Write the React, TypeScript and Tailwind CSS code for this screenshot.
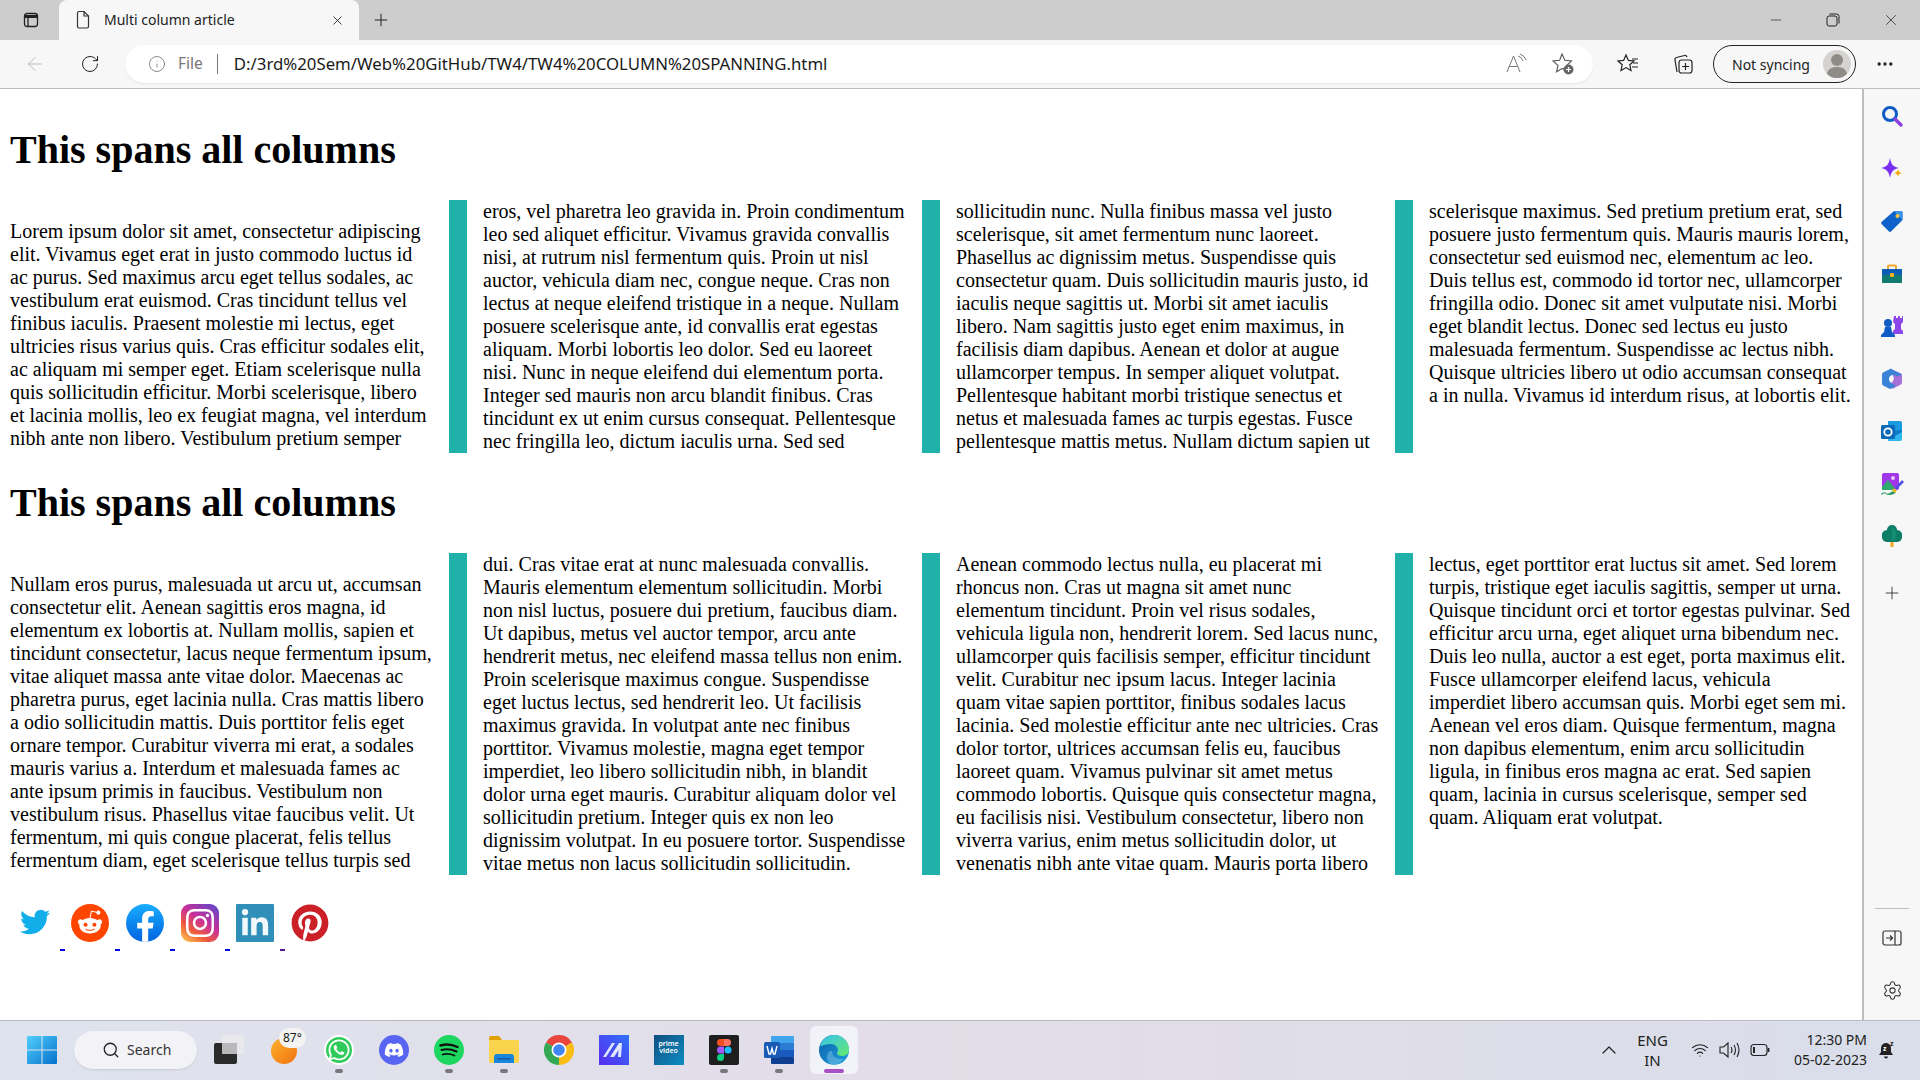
import { ChevronUp, Plus, RotateCw, ArrowLeft, Info, X, Minus, Search, Settings, MoreHorizontal, Wifi } from "lucide-react";
import { FaTwitter, FaRedditAlien, FaFacebookF, FaInstagram, FaLinkedinIn, FaPinterest, FaWhatsapp, FaDiscord } from "react-icons/fa";

const para1 =
  "Lorem ipsum dolor sit amet, consectetur adipiscing elit. Vivamus eget erat in justo commodo luctus id ac purus. Sed maximus arcu eget tellus sodales, ac vestibulum erat euismod. Cras tincidunt tellus vel finibus iaculis. Praesent molestie mi lectus, eget ultricies risus varius quis. Cras efficitur sodales elit, ac aliquam mi semper eget. Etiam scelerisque nulla quis sollicitudin efficitur. Morbi scelerisque, libero et lacinia mollis, leo ex feugiat magna, vel interdum nibh ante non libero. Vestibulum pretium semper eros, vel pharetra leo gravida in. Proin condimentum leo sed aliquet efficitur. Vivamus gravida convallis nisi, at rutrum nisl fermentum quis. Proin ut nisl auctor, vehicula diam nec, congue neque. Cras non lectus at neque eleifend tristique in a neque. Nullam posuere scelerisque ante, id convallis erat egestas aliquam. Morbi lobortis leo dolor. Sed eu laoreet nisi. Nunc in neque eleifend dui elementum porta. Integer sed mauris non arcu blandit finibus. Cras tincidunt ex ut enim cursus consequat. Pellentesque nec fringilla leo, dictum iaculis urna. Sed sed sollicitudin nunc. Nulla finibus massa vel justo scelerisque, sit amet fermentum nunc laoreet. Phasellus ac dignissim metus. Suspendisse quis consectetur quam. Duis sollicitudin mauris justo, id iaculis neque sagittis ut. Morbi sit amet iaculis libero. Nam sagittis justo eget enim maximus, in facilisis diam dapibus. Aenean et dolor at augue ullamcorper tempus. In semper aliquet volutpat. Pellentesque habitant morbi tristique senectus et netus et malesuada fames ac turpis egestas. Fusce pellentesque mattis metus. Nullam dictum sapien ut scelerisque maximus. Sed pretium pretium erat, sed posuere justo fermentum quis. Mauris mauris lorem, consectetur sed euismod nec, elementum ac leo. Duis tellus est, commodo id tortor nec, ullamcorper fringilla odio. Donec sit amet vulputate nisi. Morbi eget blandit lectus. Donec sed lectus eu justo malesuada fermentum. Suspendisse ac lectus nibh. Quisque ultricies libero ut odio accumsan consequat a in nulla. Vivamus id interdum risus, at lobortis elit.";

const para2 =
  "Nullam eros purus, malesuada ut arcu ut, accumsan consectetur elit. Aenean sagittis eros magna, id elementum ex lobortis at. Nullam mollis, sapien et tincidunt consectetur, lacus neque fermentum ipsum, vitae aliquet massa ante vitae dolor. Maecenas ac pharetra purus, eget lacinia nulla. Cras mattis libero a odio sollicitudin mattis. Duis porttitor felis eget ornare tempor. Curabitur viverra mi erat, a sodales mauris varius a. Interdum et malesuada fames ac ante ipsum primis in faucibus. Vestibulum non vestibulum risus. Phasellus vitae faucibus velit. Ut fermentum, mi quis congue placerat, felis tellus fermentum diam, eget scelerisque tellus turpis sed dui. Cras vitae erat at nunc malesuada convallis. Mauris elementum elementum sollicitudin. Morbi non nisl luctus, posuere dui pretium, faucibus diam. Ut dapibus, metus vel auctor tempor, arcu ante hendrerit metus, nec eleifend massa tellus non enim. Proin scelerisque maximus congue. Suspendisse eget luctus lectus, sed hendrerit leo. Ut facilisis maximus gravida. In volutpat ante nec finibus porttitor. Vivamus molestie, magna eget tempor imperdiet, leo libero sollicitudin nibh, in blandit dolor urna eget mauris. Curabitur aliquam dolor vel sollicitudin pretium. Integer quis ex non leo dignissim volutpat. In eu posuere tortor. Suspendisse vitae metus non lacus sollicitudin sollicitudin. Aenean commodo lectus nulla, eu placerat mi rhoncus non. Cras ut magna sit amet nunc elementum tincidunt. Proin vel risus sodales, vehicula ligula non, hendrerit lorem. Sed lacus nunc, ullamcorper quis facilisis semper, efficitur tincidunt velit. Curabitur nec ipsum lacus. Integer lacinia quam vitae sapien porttitor, finibus sodales lacus lacinia. Sed molestie efficitur ante nec ultricies. Cras dolor tortor, ultrices accumsan felis eu, faucibus laoreet quam. Vivamus pulvinar sit amet metus commodo lobortis. Quisque quis consectetur magna, eu facilisis nisi. Vestibulum consectetur, libero non viverra varius, enim metus sollicitudin dolor, ut venenatis nibh ante vitae quam. Mauris porta libero lectus, eget porttitor erat luctus sit amet. Sed lorem turpis, tristique eget iaculis sagittis, semper ut urna. Quisque tincidunt orci et tortor egestas pulvinar. Sed efficitur arcu urna, eget aliquet urna bibendum nec. Duis leo nulla, auctor a est eget, porta maximus elit. Fusce ullamcorper eleifend lacus, vehicula imperdiet libero accumsan quis. Morbi eget sem mi. Aenean vel eros diam. Quisque fermentum, magna non dapibus elementum, enim arcu sollicitudin ligula, in finibus eros magna ac erat. Sed sapien quam, lacinia in cursus scelerisque, semper sed quam. Aliquam erat volutpat.";

function Heading() {
  return <h1 className="[column-span:all] text-[40px] font-bold my-[27px] leading-[46px]">This spans all columns</h1>;
}

function Socials() {
  const box = "inline align-baseline";
  return (
    <p className="mt-[23px]">
      <a href="#" className="text-[#0000ee] underline">
        <svg width={50} height={50} viewBox="0 0 50 50" className={box}>
          <FaTwitter x={10} y={9} size={30} color="#12aeea" />
        </svg>{" "}
      </a>
      <a href="#" className="text-[#0000ee] underline">
        <svg width={50} height={50} viewBox="0 0 50 50" className={box}>
          <circle cx={25} cy={25} r={19} fill="#ff4500" />
          <FaRedditAlien x={12} y={11} size={26} color="#fff" />
        </svg>{" "}
      </a>
      <a href="#" className="text-[#0000ee] underline">
        <svg width={50} height={50} viewBox="0 0 50 50" className={box}>
          <defs>
            <linearGradient id="fb" x1="0" y1="0" x2="0" y2="1">
              <stop offset="0" stopColor="#18acfe" />
              <stop offset="1" stopColor="#0163e0" />
            </linearGradient>
            <clipPath id="fbc">
              <circle cx={25} cy={25} r={19} />
            </clipPath>
          </defs>
          <circle cx={25} cy={25} r={19} fill="url(#fb)" />
          <g clipPath="url(#fbc)">
            <FaFacebookF x={10} y={13} size={31} color="#fff" />
          </g>
        </svg>{" "}
      </a>
      <a href="#" className="text-[#0000ee] underline">
        <svg width={50} height={50} viewBox="0 0 50 50" className={box}>
          <defs>
            <linearGradient id="ig" x1="0.1" y1="1" x2="0.8" y2="0">
              <stop offset="0" stopColor="#fdc14e" />
              <stop offset="0.3" stopColor="#ee5a3c" />
              <stop offset="0.6" stopColor="#c9309a" />
              <stop offset="1" stopColor="#6a45c4" />
            </linearGradient>
          </defs>
          <rect x={6} y={6} width={38} height={38} rx={9} fill="url(#ig)" />
          <FaInstagram x={9} y={9} size={32} color="#fff" />
        </svg>{" "}
      </a>
      <a href="#" className="text-[#551a8b] underline">
        <svg width={50} height={50} viewBox="0 0 50 50" className={box}>
          <rect x={6} y={6} width={38} height={38} rx={1} fill="#2f8fb9" />
          <FaLinkedinIn x={10} y={11} size={30} color="#f0f8fb" />
        </svg>{" "}
      </a>
      <a href="#" className="text-[#0000ee] underline">
        <svg width={50} height={50} viewBox="0 0 50 50" className={box}>
          <circle cx={25} cy={25} r={18} fill="#fff" />
          <FaPinterest x={6} y={6} size={38} color="#cb2027" />
        </svg>
      </a>
    </p>
  );
}

function TabBar() {
  return (
    <div className="h-10 bg-[#cdcdcd] flex items-stretch shrink-0">
      <div className="w-[59px] flex items-center justify-center">
        <svg width={18} height={18} viewBox="0 0 18 18" fill="none" stroke="#222" strokeWidth={1.3} className="ml-[2px]">
          <rect x={2.5} y={2.5} width={13} height={13} rx={2.5} />
          <path d="M3 5.5h12" strokeWidth={3} />
          <path d="M6 5v10" />
        </svg>
      </div>
      <div className="w-[300px] bg-[#f7f7f7] rounded-t-lg flex items-center text-[14px] text-[#222] pl-[15px] pr-[14px]">
        <svg width={18} height={20} viewBox="0 0 18 20" fill="none" stroke="#333" strokeWidth={1.2} className="mr-[22px]">
          <path d="M3.5 3a1.5 1.5 0 0 1 1.5-1.5h5l4.500 4.500v10.500a1.500 1.500 0 0 1-1.500 1.500h-8a1.500 1.500 0 0 1-1.500-1.500z" />
          <path d="M10 1.500v4.500h4.500" />
        </svg>
        <span className="-ml-[10px] font-['Noto_Sans',sans-serif] flex-1 -translate-y-px">Multi column article</span>
        <X size={15} strokeWidth={1.4} color="#222" />
      </div>
      <div className="w-[44px] flex items-center justify-center">
        <Plus size={20} strokeWidth={1.2} color="#222" />
      </div>
      <div className="flex-1" />
      <div className="flex items-center">
        <div className="w-[56px] flex justify-center mr-0">
          <Minus size={16} strokeWidth={1} color="#222" />
        </div>
        <div className="w-[58px] flex justify-center">
          <svg width={14} height={14} viewBox="0 0 14 14" fill="none" stroke="#222" strokeWidth={1}>
            <rect x={1} y={3} width={10} height={10} rx={2} />
            <path d="M3.500 1h7a2.500 2.500 0 0 1 2.500 2.500v7" />
          </svg>
        </div>
        <div className="w-[58px] flex justify-center">
          <X size={18} strokeWidth={1} color="#222" />
        </div>
      </div>
    </div>
  );
}

function Toolbar() {
  return (
    <div className="h-[49px] bg-[#f7f7f7] border-b border-[#bfbfbf] flex items-center shrink-0 font-['Noto_Sans',sans-serif]">
      <div className="w-[70px] flex justify-center">
        <ArrowLeft size={22} strokeWidth={1} color="#b5b5b5" />
      </div>
      <div className="w-[40px] flex justify-center">
        <RotateCw size={20} strokeWidth={1.2} color="#222" />
      </div>
      <div className="ml-[15px] w-[1468px] h-[38px] bg-white rounded-full flex items-center pl-[23px] pr-[18px] shadow-[0_1px_2px_rgba(0,0,0,0.08)]">
        <Info size={18} strokeWidth={1} color="#666" />
        <span className="ml-[12px] text-[#777] text-[15.5px]">File</span>
        <span className="ml-[14px] w-px h-5 bg-[#777]" />
        <span className="ml-[16px] text-[#1a1a1a] text-[16.8px] flex-1">D:/3rd%20Sem/Web%20GitHub/TW4/TW4%20COLUMN%20SPANNING.html</span>
        <svg width={22} height={22} viewBox="0 0 22 22" fill="none" stroke="#777" strokeWidth={1} className="mr-[24px]">
          <path d="M2 19l6.500-16 6.500 16M4.500 13.500h8" />
          <path d="M13 3q4 1 5 5M15 1q5 2 6 6" />
        </svg>
        <svg width={24} height={24} viewBox="0 0 24 24" fill="none" stroke="#555" strokeWidth={1.1}>
          <path d="M11 2l2.800 6.300 6.700.7-5 4.600 1 4-5.500-1-5.500 3.200 1.500-6.400-5-4.500 6.700-.7z" />
          <circle cx={17.500} cy={17.500} r={5} fill="#666" stroke="none" />
          <path d="M17.500 15v5M15 17.500h5" stroke="#fff" strokeWidth={1.2} />
        </svg>
      </div>
      <svg width={22} height={22} viewBox="0 0 22 22" fill="none" stroke="#222" strokeWidth={1.2} className="ml-[24px]">
        <path d="M9 2l2.400 5.400 5.600.6-4.200 3.800 1.200 5.800-5-3-5 3 1.200-5.800L1 8l5.600-.6z" />
        <path d="M15 6h6M16 10h5M15 14h6" />
      </svg>
      <svg width={22} height={22} viewBox="0 0 22 22" fill="none" stroke="#222" strokeWidth={1.2} className="ml-[33px]">
        <path d="M5 19l-2-12a2 2 0 0 1 1.500-2.500l8-2a2 2 0 0 1 2.500 1.500" />
        <rect x={7} y={7} width={13} height={13} rx={2.500} fill="#f7f7f7" />
        <path d="M13.500 10v7M10 13.500h7" />
      </svg>
      <div className="ml-[19px] w-[143px] h-[38px] rounded-full border border-[#222] flex items-center pl-[18px] pr-[4px] text-[14px] text-[#222] justify-between">
        <span>Not syncing</span>
        <svg width={28} height={28} viewBox="0 0 28 28">
          <circle cx={14} cy={14} r={14} fill="#d5d3cf" />
          <circle cx={14} cy={10} r={6} fill="#8f8c87" />
          <path d="M4 24c1-6 6-7 10-7s9 1 10 7a14 14 0 0 1-20 0z" fill="#8f8c87" />
        </svg>
      </div>
      <div className="flex-1 flex justify-center pr-[6px]">
        <MoreHorizontal size={20} strokeWidth={2} color="#222" />
      </div>
    </div>
  );
}

function SideBar() {
  const cell = "h-[52.5px] flex items-center justify-center";
  return (
    <aside className="w-[58px] bg-[#f7f7f7] border-l-2 border-[#bdbdbd] pt-px flex flex-col items-stretch shrink-0">
      <div className={cell}>
        <svg width={24} height={24} viewBox="0 0 24 24" fill="none">
          <circle cx={10} cy={10} r={6.500} stroke="#0f5cc4" strokeWidth={3} />
          <path d="M15 15l6 6" stroke="#8a3fe0" strokeWidth={3.500} strokeLinecap="round" />
        </svg>
      </div>
      <div className={cell}>
        <svg width={24} height={24} viewBox="0 0 24 24">
          <path d="M10 1c1 6 3 9 9 10-6 1-8 4-9 10-1-6-3-9-9-10 6-1 8-4 9-10z" fill="#7a2ff0" />
          <path d="M18 12c.4 2.500 1.500 3.600 4 4-2.500.4-3.600 1.500-4 4-.4-2.500-1.500-3.600-4-4 2.500-.4 3.600-1.500 4-4z" fill="#f5a90f" />
        </svg>
      </div>
      <div className={cell}>
        <svg width={24} height={24} viewBox="0 0 24 24">
          <path d="M14 2h7a1.500 1.500 0 0 1 1.500 1.500V11L11 22.500a1.500 1.500 0 0 1-2 0L1.500 15a1.500 1.500 0 0 1 0-2z" fill="#0f62c9" />
          <path d="M14 2h7a1.500 1.500 0 0 1 1.500 1.500V11z" fill="#3c94e8" />
          <circle cx={17.500} cy={7} r={2} fill="#ffc83d" />
        </svg>
      </div>
      <div className={cell}>
        <svg width={24} height={24} viewBox="0 0 24 24">
          <path d="M8 7V4.500a1 1 0 0 1 1-1h6a1 1 0 0 1 1 1V7" fill="none" stroke="#f0a92e" strokeWidth={2} />
          <rect x={2} y={7} width={20} height={6} fill="#0f5fb8" />
          <rect x={2} y={13} width={20} height={8} fill="#137a70" />
          <rect x={10} y={11} width={4} height={4} rx={1} fill="#f7b21e" />
        </svg>
      </div>
      <div className={cell}>
        <svg width={24} height={24} viewBox="0 0 24 24">
          <path d="M14 2h2v2h2V2h2v2h2V2h1v6l-2 2v5l2 2v3h-10v-3l2-2v-5l-2-2z" fill="#8c45e8" />
          <circle cx={8} cy={9} r={4} fill="#0f5cc4" />
          <path d="M5 13h6l1 5 3 3v2H1v-2l3-3z" fill="#0f5cc4" />
        </svg>
      </div>
      <div className={cell}>
        <svg width={24} height={24} viewBox="0 0 24 24" fill="none">
          <path d="M10 1.500l10 4.500a3 3 0 0 1 2 3v6a3 3 0 0 1-2 3l-8 4-1-6a5 5 0 0 0 0-9z" fill="#a56fd8" />
          <path d="M11 1.500L4 5a3 3 0 0 0-2 3v8a3 3 0 0 0 2 3l6 3 6-3-4-2.500a4.500 4.500 0 1 1 5-7l5-2-10-5z" fill="#3b82d9" />
        </svg>
      </div>
      <div className={cell}>
        <svg width={24} height={24} viewBox="0 0 24 24">
          <path d="M8 2h12a2 2 0 0 1 2 2v8H8z" fill="#1a9be0" />
          <path d="M10 12l12 0v8a2 2 0 0 1-2 2H8v-10z" fill="#2fb5ef" />
          <path d="M8 12l14-1v2l-9 5z" fill="#0f78c8" />
          <rect x={1} y={6} width={14} height={14} rx={1.500} fill="#0b69b8" />
          <circle cx={8} cy={13} r={3.700} fill="none" stroke="#fff" strokeWidth={1.800} />
        </svg>
      </div>
      <div className={cell}>
        <svg width={24} height={24} viewBox="0 0 24 24">
          <rect x={2} y={1} width={17} height={17} rx={2} fill="#a237e8" />
          <circle cx={13} cy={6} r={2} fill="#e9c4ff" />
          <path d="M2 15l6-7 6 7v3H2z" fill="#2eaa6e" />
          <path d="M14 17l8-9 2 2-8 8z" fill="#5250e6" />
          <path d="M1 22q3-3 5-1t5-1l3-1 2 1-2 2q-6 2-8 0t-4 1z" fill="#239a62" />
          <circle cx={14.500} cy={18.500} r={2} fill="#f0b52b" />
        </svg>
      </div>
      <div className={cell}>
        <svg width={24} height={24} viewBox="0 0 24 24">
          <path d="M12 1a5 5 0 0 1 5 5 5 5 0 0 1 5 6 5 5 0 0 1-5 6H7a5 5 0 0 1-5-6 5 5 0 0 1 5-6 5 5 0 0 1 5-5z" fill="#0e7d68" />
          <path d="M12 3a8 8 0 0 1 4 8 8 8 0 0 1-4 7z" fill="#18a07a" opacity={0.5} />
          <rect x={10.500} y={18} width={3} height={5} fill="#f5a623" />
        </svg>
      </div>
      <div className="h-[52px] mt-[4px] flex items-center justify-center">
        <Plus size={20} strokeWidth={1} color="#222" />
      </div>
      <div className="mt-auto mx-[11px] h-px bg-[#bfbfbf]" />
      <div className="h-[58px] flex items-center justify-center">
        <svg width={20} height={18} viewBox="0 0 20 18" fill="none" stroke="#333" strokeWidth={1.200}>
          <rect x={1} y={2} width={18} height={14} rx={2} />
          <path d="M13 2v14M4 9h6M8 6.500L10.500 9 8 11.500" />
        </svg>
      </div>
      <div className="h-[53px] pb-[6px] flex items-center justify-center">
        <Settings size={21} strokeWidth={1.200} color="#333" />
      </div>
    </aside>
  );
}

function Dock({ active, on, children }: { active?: boolean; on?: boolean; children: React.ReactNode }) {
  return (
    <div className={active ? "relative w-[48px] h-[48px] mx-[3.500px] flex items-center justify-center rounded-md bg-[#f1f3f9]" : "relative w-[48px] h-[48px] mx-[3.500px] flex items-center justify-center"}>
      {children}
      {on && <span className="absolute bottom-[1px] left-[20px] w-[8px] h-[4px] rounded-full bg-[#77777c]" />}
      {active && <span className="absolute bottom-[1px] left-[14px] w-[20px] h-[4px] rounded-full bg-[#a94fc8]" />}
    </div>
  );
}

function TaskBar() {
  return (
    <footer className="h-[60px] shrink-0 border-t border-[#b9b9be] pb-[2px] bg-linear-to-r from-[#dee3ee] via-[#e3dde8] to-[#d9deea] flex items-center font-['Noto_Sans',sans-serif] text-[#222]">
      <svg width={30} height={30} viewBox="0 0 30 30" className="ml-[27px]">
        <defs>
          <linearGradient id="win" x1="0" y1="0" x2="1" y2="1">
            <stop offset="0" stopColor="#4fd0fb" />
            <stop offset="1" stopColor="#0670cc" />
          </linearGradient>
        </defs>
        <path d="M1 1h13.500v13.500H0V2a1 1 0 0 1 1-1zM15.500 1H29a1 1 0 0 1 1 1v12.500H15.500zM0 15.500h14.500V29H1a1 1 0 0 1-1-1zM15.500 15.500H30V28a1 1 0 0 1-1 1H15.500z" fill="url(#win)" />
      </svg>
      <div className="ml-[17px] w-[123px] h-[38px] rounded-full bg-[#f3f2f6] shadow-[0_1px_2px_rgba(0,0,0,0.1)] flex items-center pl-[28px] text-[14px]">
        <Search size={18} strokeWidth={1.700} color="#222" />
        <span className="ml-[7px] text-[#333]">Search</span>
      </div>
      <svg width={32} height={30} viewBox="0 0 32 30" className="ml-[17px]">
        <rect x={0} y={8} width={23} height={21} rx={2} fill="#2b2b2b" />
        <rect x={8} y={0} width={22} height={19} rx={2} fill="#e9e9ec" opacity={0.95} />
        <rect x={8} y={8} width={15} height={11} fill="#b9b9bc" />
      </svg>
      <div className="relative ml-[25px] w-[26px] h-[26px] mt-[2px] rounded-full bg-linear-to-br from-[#fbb02b] to-[#f0720f]">
        <span className="absolute -top-[10px] left-[8px] px-[4px] h-[20px] leading-[20px] rounded-full bg-[#f4f3f2] text-[12px] text-[#1a1a1a]">87°</span>
      </div>
      <div className="ml-[14px] flex items-center">
        <Dock on>
          <span className="w-[30px] h-[30px] rounded-full bg-[#2fcb5a] border-2 border-white flex items-center justify-center">
            <FaWhatsapp size={24} color="#fff" />
          </span>
        </Dock>
        <Dock>
          <span className="w-[30px] h-[30px] rounded-full bg-[#5865f2] flex items-center justify-center">
            <FaDiscord size={20} color="#fff" />
          </span>
        </Dock>
        <Dock on>
          <span className="w-[30px] h-[30px] rounded-full bg-[#1ed760] flex items-center justify-center">
            <svg width={20} height={16} viewBox="0 0 20 16" fill="none" stroke="#111" strokeLinecap="round">
              <path d="M1.500 3.500q8.500-2.500 17 1.500" strokeWidth={2.400} />
              <path d="M2.500 8q7.500-2 15 1.500" strokeWidth={2.100} />
              <path d="M3.500 12.500q6-1.500 12 1" strokeWidth={1.800} />
            </svg>
          </span>
        </Dock>
        <Dock on>
          <svg width={30} height={27} viewBox="0 0 30 27">
            <path d="M0 2a2 2 0 0 1 2-2h8l3 4H0z" fill="#e0a000" />
            <path d="M0 4h30v21a2 2 0 0 1-2 2H2a2 2 0 0 1-2-2z" fill="#fbd44e" />
            <path d="M5 21a3 3 0 0 1 3-3h14a3 3 0 0 1 3 3v6H5z" fill="#1a86d9" />
            <rect x={8} y={22} width={14} height={1.500} fill="#0d5fa8" />
          </svg>
        </Dock>
        <Dock>
          <svg width={30} height={30} viewBox="0 0 30 30">
            <path d="M15 15L2 7.500A15 15 0 0 1 28 7.500z" fill="#e8453c" />
            <path d="M15 15L28 7.500A15 15 0 0 1 15 30z" fill="#f9bc15" />
            <path d="M15 15L15 30A15 15 0 0 1 2 7.500z" fill="#34a853" />
            <circle cx={15} cy={15} r={7.500} fill="#fff" />
            <circle cx={15} cy={15} r={5.800} fill="#4285f4" />
          </svg>
        </Dock>
        <Dock>
          <svg width={30} height={30} viewBox="0 0 30 30">
            <defs>
              <linearGradient id="ma" x1="0" y1="1" x2="1" y2="0">
                <stop offset="0" stopColor="#5a2bf0" />
                <stop offset="1" stopColor="#2f72f8" />
              </linearGradient>
            </defs>
            <rect width={30} height={30} fill="url(#ma)" />
            <path d="M4 22L13 8h3L7 22zM11 22l9-14h3l-1 14h-3l.5-7-4.500 7z" fill="#dfe6ff" />
          </svg>
        </Dock>
        <Dock>
          <span className="w-[30px] h-[30px] bg-linear-to-br from-[#0f4f80] to-[#0a8fc4] flex flex-col items-center pt-[5px] text-white text-[7px] leading-[7.500px] font-semibold">
            <span>prime</span>
            <span>video</span>
          </span>
        </Dock>
        <Dock on>
          <svg width={30} height={30} viewBox="0 0 30 30">
            <rect width={30} height={30} rx={2} fill="#1e1e1e" />
            <circle cx={19} cy={15} r={3.500} fill="#1abcfe" />
            <path d="M8 7.500A3.500 3.500 0 0 1 11.500 4H15v7h-3.500A3.500 3.500 0 0 1 8 7.500z" fill="#f24e1e" />
            <path d="M15 4h3.500a3.500 3.500 0 0 1 0 7H15z" fill="#ff7262" />
            <path d="M15 11.500v7h-3.500a3.500 3.500 0 0 1 0-7z" fill="#a259ff" />
            <path d="M15 19v3.500a3.500 3.500 0 1 1-3.500-3.500z" fill="#0acf83" />
          </svg>
        </Dock>
        <Dock on>
          <svg width={30} height={30} viewBox="0 0 30 30">
            <rect x={7} y={1} width={23} height={7} rx={1} fill="#41a5ee" />
            <rect x={7} y={8} width={23} height={7} fill="#2b7cd3" />
            <rect x={7} y={15} width={23} height={7} fill="#185abd" />
            <rect x={7} y={22} width={23} height={7} rx={1} fill="#103f91" />
            <rect x={0} y={7} width={16} height={16} rx={1.500} fill="#1a5cb5" />
            <path d="M3 11l2 8h1.500L8 13.500 9.500 19H11l2-8" fill="none" stroke="#fff" strokeWidth={1.400} />
          </svg>
        </Dock>
        <Dock active>
          <svg width={30} height={30} viewBox="0 0 30 30">
            <defs>
              <linearGradient id="edge" x1="0" y1="0" x2="1" y2="1">
                <stop offset="0" stopColor="#0c5fa8" />
                <stop offset="1" stopColor="#1da0e0" />
              </linearGradient>
              <linearGradient id="edge2" x1="0" y1="0" x2="1" y2="1">
                <stop offset="0" stopColor="#35c1f1" />
                <stop offset="1" stopColor="#66eb6e" />
              </linearGradient>
            </defs>
            <circle cx={15} cy={15} r={15} fill="url(#edge)" />
            <path d="M1 11C3 4 9 0 15 0c9 0 15 7 15 14 0 5-3 7-7 7-3 0-5-1-5-3 0-1 1-1.500 1-3 0-3-3-6-7-6-5 0-9 2-11 2z" fill="url(#edge2)" />
            <path d="M13 16c0 5 4 8 9 8 1 0 2 0 3-.5C22 27 18.500 30 15 30 9 30 6 23 9 18c1-1.500 3-3 4-2z" fill="#e8f6fc" opacity={0.25} />
          </svg>
        </Dock>
      </div>
      <div className="flex-1" />
      <ChevronUp size={24} strokeWidth={1.200} color="#222" />
      <div className="ml-[9px] w-[45px] flex flex-col items-center text-[15px] leading-[20px]">
        <span>ENG</span>
        <span>IN</span>
      </div>
      <Wifi size={18} strokeWidth={1.600} color="#222" className="ml-[16px]" />
      <svg width={22} height={18} viewBox="0 0 22 18" fill="none" stroke="#222" strokeWidth={1.100} className="ml-[10px]">
        <path d="M1 6h3.500L9 2v14l-4.500-4H1z" />
        <path d="M12 6q2 3 0 6M15 4q3 5 0 10M18 2q4 7 0 14" />
      </svg>
      <svg width={20} height={14} viewBox="0 0 20 14" fill="none" stroke="#222" strokeWidth={1.100} className="ml-[9px]">
        <rect x={1} y={1.500} width={16} height={11} rx={3} />
        <rect x={3} y={4} width={2} height={6} fill="#222" stroke="none" />
        <path d="M18.500 5v4" strokeWidth={1.800} />
      </svg>
      <div className="ml-[9px] w-[88px] flex flex-col items-end text-[14px] leading-[20px]">
        <span>12:30 PM</span>
        <span>05-02-2023</span>
      </div>
      <svg width={18} height={20} viewBox="0 0 18 20" className="ml-[11px] mr-[24px]">
        <path d="M8 3a5 5 0 0 1 5 5v4l2 3H1l2-3V8a5 5 0 0 1 5-5z" fill="#222" />
        <path d="M6 16.500a2 2 0 0 0 4 0z" fill="#222" />
        <text x={5} y={11} fontSize={7} fontWeight={700} fill="#fff" fontFamily="Noto Sans, sans-serif">z</text>
        <text x={12} y={6} fontSize={7} fontWeight={700} fill="#222" fontFamily="Noto Sans, sans-serif">z</text>
      </svg>
    </footer>
  );
}

export default function App() {
  return (
    <div className="w-[1920px] h-[1080px] overflow-hidden flex flex-col bg-white">
      <TabBar />
      <Toolbar />
      <div className="flex flex-1 min-h-0">
        <main className="flex-1 min-w-0 px-[10px] pt-[11px] pb-[10px] bg-white text-black text-[20px] leading-[23px] font-['Liberation_Serif','Times_New_Roman',serif]">
          <article className="[column-count:4] [column-gap:50px] [column-rule:18px_solid_#20b2aa]">
            <Heading />
            <p className="my-5">{para1}</p>
            <Heading />
            <p className="my-5">{para2}</p>
          </article>
          <Socials />
        </main>
        <SideBar />
      </div>
      <TaskBar />
    </div>
  );
}
